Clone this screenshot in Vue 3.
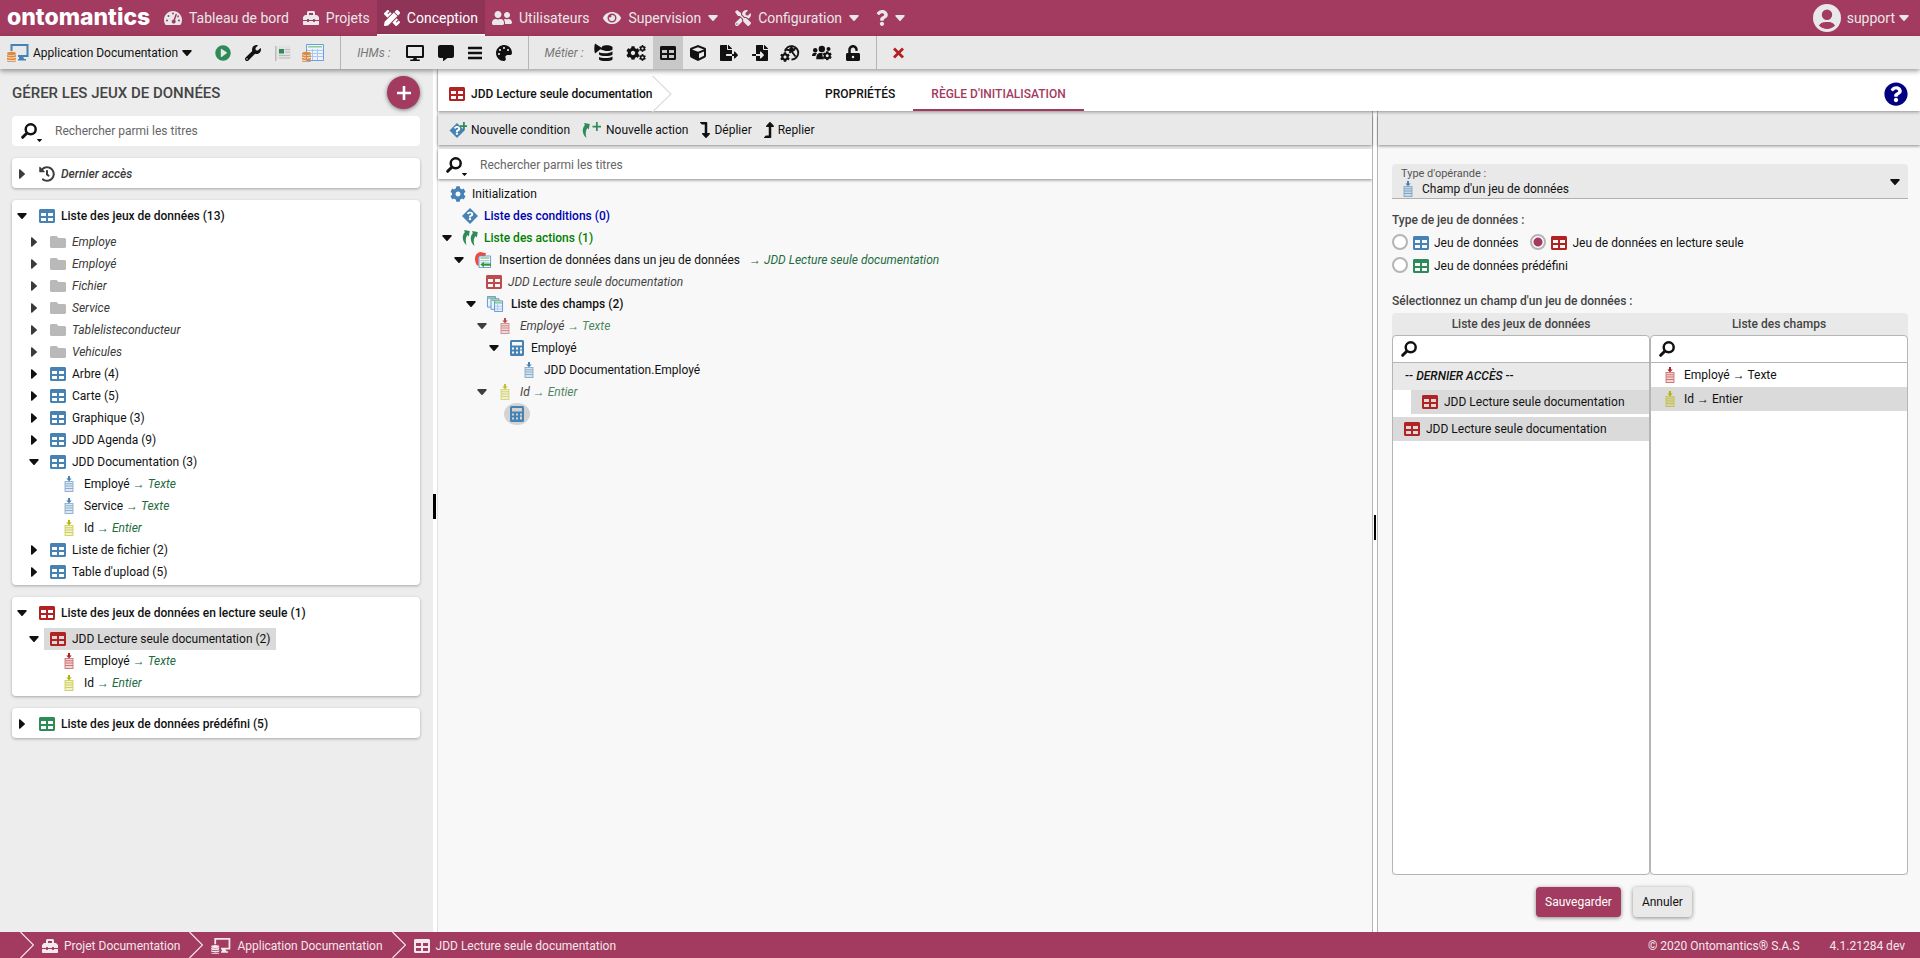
<script setup>
import { ref } from 'vue'

const navItems = [
  { label: 'Tableau de bord', icon: 'gauge', w: 'w18' },
  { label: 'Projets', icon: 'toolbox', w: 'w16' },
  { label: 'Conception', icon: 'pencil-ruler', w: 'w16', active: true },
  { label: 'Utilisateurs', icon: 'users', w: 'w20' },
  { label: 'Supervision', icon: 'eye', w: 'w18', menu: true },
  { label: 'Configuration', icon: 'tools', w: 'w16', menu: true }
]

const uiTools = [
  { name: 'Écrans', icon: 'desktop', w: 'w18' },
  { name: 'Messages', icon: 'comment', w: 'w16' },
  { name: 'Menus', icon: 'bars', w: 'w14' },
  { name: 'Thèmes', icon: 'palette', w: 'w16' }
]

const domainTools = [
  { name: 'Traitements', icon: 'db-flow', w: 'w16' },
  { name: 'Automates', icon: 'cogs', w: 'w20' },
  { name: 'Jeux de données', icon: 'table', w: 'w16', active: true },
  { name: 'Objets', icon: 'cube', w: 'w16' },
  { name: 'Exports', icon: 'file-export', w: 'w18' },
  { name: 'Imports', icon: 'file-import', w: 'w16' },
  { name: 'Services web', icon: 'globe-cog', w: 'w16' },
  { name: 'Profils', icon: 'users-cog', w: 'w20' },
  { name: 'Droits', icon: 'unlock', w: 'w14' }
]

const folder = label => ({ label, icon: 'folder', tone: 'muted', caret: 'right', italic: true })
const dataset = label => ({ label, icon: 'table', tone: 'blue', caret: 'right' })
const field = (label, type, tone) => ({ label, type, tone, icon: 'field', leaf: true })

const groups = [
  { label: 'Dernier accès', icon: 'history', tone: 'dark', italic: true, open: false, rows: [] },
  {
    label: 'Liste des jeux de données (13)', icon: 'table', tone: 'blue', open: true,
    rows: [
      folder('Employe'), folder('Employé'), folder('Fichier'),
      folder('Service'), folder('Tablelisteconducteur'), folder('Vehicules'),
      dataset('Arbre (4)'), dataset('Carte (5)'), dataset('Graphique (3)'), dataset('JDD Agenda (9)'),
      { ...dataset('JDD Documentation (3)'), caret: 'down' },
      field('Employé', 'Texte', 'blue'), field('Service', 'Texte', 'blue'), field('Id', 'Entier', 'yellow'),
      dataset('Liste de fichier (2)'), dataset("Table d'upload (5)")
    ]
  },
  {
    label: 'Liste des jeux de données en lecture seule (1)', icon: 'table', tone: 'red', open: true,
    rows: [
      { label: 'JDD Lecture seule documentation (2)', icon: 'table', tone: 'red', caret: 'down', selected: true },
      field('Employé', 'Texte', 'red'), field('Id', 'Entier', 'yellow')
    ]
  },
  { label: 'Liste des jeux de données prédéfini (5)', icon: 'table', tone: 'green', open: false, rows: [] }
]

const ruleTree = [
  { level: 0, icon: 'cog', w: 'w16', tone: 'blue', label: 'Initialization' },
  { level: 1, icon: 'condition', w: 'w16', tone: 'blue', label: 'Liste des conditions (0)', look: 'navy strong' },
  { level: 1, icon: 'actions', w: 'w16', tone: 'green', label: 'Liste des actions (1)', look: 'forest strong', caret: true },
  { level: 2, icon: 'insert', w: 'w18', label: 'Insertion de données dans un jeu de données', target: 'JDD Lecture seule documentation', look: 'wide', caret: true },
  { level: 3, icon: 'table', w: 'w16', tone: 'red', label: 'JDD Lecture seule documentation', look: 'italic faded' },
  { level: 3, icon: 'sheets', w: 'w18', label: 'Liste des champs (2)', look: 'strong wide', caret: true },
  { level: 4, icon: 'field', w: 'w16', tone: 'red', label: 'Employé', type: 'Texte', look: 'italic wide faded', caret: true },
  { level: 5, icon: 'calculator', w: 'w16', tone: 'blue', label: 'Employé', caret: true },
  { level: 6, icon: 'field', w: 'w16', tone: 'blue', label: 'JDD Documentation.Employé', look: 'wide' },
  { level: 4, icon: 'field', w: 'w16', tone: 'yellow', label: 'Id', type: 'Entier', look: 'italic wide faded', caret: true },
  { level: 5, icon: 'calculator', w: 'w16', tone: 'blue', label: '', picked: true }
]

const kinds = [
  { value: 'std', label: 'Jeu de données', tone: 'blue' },
  { value: 'ro', label: 'Jeu de données en lecture seule', tone: 'red' },
  { value: 'pre', label: 'Jeu de données prédéfini', tone: 'green' }
]
const kind = ref('ro')
const operand = ref('field')

const crumbs = [
  { label: 'Projet Documentation', icon: 'toolbox', w: 'w16' },
  { label: 'Application Documentation', icon: 'app-db', w: 'w20' },
  { label: 'JDD Lecture seule documentation', icon: 'table', w: 'w16' }
]
</script>

<template>
  <div class="page">
    <svg class="defs" aria-hidden="true">
      <symbol id="table" viewBox="0 0 512 512"><path d="M464 32H48C21.490 32 0 53.490 0 80v352c0 26.510 21.490 48 48 48h416c26.510 0 48-21.490 48-48V80c0-26.510-21.490-48-48-48zM224 416H64v-96h160v96zm0-160H64v-96h160v96zm224 160H288v-96h160v96zm0-160H288v-96h160v96z" /></symbol>
      <symbol id="folder" viewBox="0 0 512 512"><path d="M464 128H272l-64-64H48C21.490 64 0 85.490 0 112v288c0 26.510 21.490 48 48 48h416c26.510 0 48-21.490 48-48V176c0-26.510-21.490-48-48-48z" /></symbol>
      <symbol id="caret-down" viewBox="0 0 10 6"><path d="M1 0h8a.8.8 0 0 1 .6 1.300L5.600 5.700a.8.8 0 0 1-1.200 0L.4 1.300A.8.8 0 0 1 1 0z" /></symbol>
      <symbol id="caret-right" viewBox="0 0 6 10"><path d="M0 1v8a.8.8 0 0 0 1.300.6L5.700 5.600a.8.8 0 0 0 0-1.200L1.300.4A.8.8 0 0 0 0 1z" /></symbol>
      <symbol id="gauge" viewBox="0 0 576 512">
        <path fill-rule="evenodd" d="M288 32C129 32 0 161 0 320c0 53 14 102 39 145 6 10 16 15 27 15h443c11 0 22-5 28-15 25-43 39-92 39-145C576 161 447 32 288 32zM256 108a32 32 0 1 1 64 0 32 32 0 0 1-64 0zM64 336a32 32 0 1 1 64 0 32 32 0 0 1-64 0zM112 192a32 32 0 1 1 64 0 32 32 0 0 1-64 0zM448 336a32 32 0 1 1 64 0 32 32 0 0 1-64 0zM366 135l-58 170a64 64 0 1 0 46 16l57-170a24 24 0 0 0-45-16zM420 225l18-54a32 32 0 1 1-18 54z" />
      </symbol>
      <symbol id="toolbox" viewBox="0 0 512 512"><path d="M502.630 214.630l-45.250-45.250c-6-6-14.140-9.370-22.630-9.370H384V80c0-26.510-21.490-48-48-48H176c-26.510 0-48 21.490-48 48v80H77.250c-8.490 0-16.620 3.370-22.630 9.370L9.370 214.630c-6 6-9.370 14.140-9.370 22.630V320h128v-16c0-8.840 7.160-16 16-16h32c8.840 0 16 7.160 16 16v16h128v-16c0-8.840 7.160-16 16-16h32c8.840 0 16 7.160 16 16v16h128v-82.750c0-8.480-3.370-16.620-9.370-22.620zM320 160H192V96h128v64zm64 208c0 8.840-7.160 16-16 16h-32c-8.840 0-16-7.160-16-16v-16H192v16c0 8.840-7.160 16-16 16h-32c-8.840 0-16-7.160-16-16v-16H0v96c0 17.670 14.330 32 32 32h448c17.670 0 32-14.330 32-32v-96H384v16z" /></symbol>
      <symbol id="pencil-ruler" viewBox="0 0 512 512"><path d="M109.460 244.040l134.580-134.560-44.120-44.120-61.680 61.680a7.919 7.919 0 0 1-11.210 0l-11.210-11.210c-3.100-3.100-3.100-8.120 0-11.210l61.680-61.680-33.640-33.650C131.470-3.100 111.390-3.100 99 9.290L9.290 99c-12.380 12.390-12.390 32.470 0 44.860l100.170 100.180zm388.470-116.800c18.760-18.760 18.750-49.170 0-67.930l-45.250-45.250c-18.760-18.760-49.180-18.760-67.950 0l-46.020 46.010 113.200 113.200 46.020-46.030zM316.080 82.710l-297 296.960L.32 487.110c-2.530 14.490 10.090 27.110 24.590 24.560l107.450-18.840L429.280 195.900 316.080 82.710zm186.630 285.430l-33.640-33.640-61.680 61.680c-3.100 3.100-8.120 3.100-11.210 0l-11.210-11.210c-3.090-3.100-3.090-8.120 0-11.210l61.680-61.680-44.140-44.140L267.930 402.500l100.210 100.200c12.390 12.390 32.470 12.390 44.860 0l89.710-89.700c12.390-12.390 12.390-32.470 0-44.860z" /></symbol>
      <symbol id="users" viewBox="0 0 640 512"><path d="M192 256c61.900 0 112-50.100 112-112S253.900 32 192 32 80 82.100 80 144s50.100 112 112 112zm76.800 32h-8.300c-20.800 10-43.900 16-68.500 16s-47.600-6-68.500-16h-8.300C51.600 288 0 339.600 0 403.200V432c0 26.500 21.500 48 48 48h288c26.500 0 48-21.500 48-48v-28.800c0-63.600-51.600-115.200-115.200-115.200zM480 256c53 0 96-43 96-96s-43-96-96-96-96 43-96 96 43 96 96 96zm48 32h-3.800c-13.900 4.800-28.600 8-44.200 8s-30.300-3.200-44.200-8H432c-20.400 0-39.200 5.900-55.700 15.400 24.400 26.300 39.700 61.200 39.700 99.800v38.400c0 2.200-.5 4.300-.6 6.400H592c26.500 0 48-21.500 48-48 0-61.900-50.100-112-112-112z" /></symbol>
      <symbol id="eye" viewBox="0 0 576 512"><path d="M572.520 241.400C518.290 135.590 410.930 64 288 64S57.680 135.640 3.480 241.410a32.350 32.350 0 0 0 0 29.190C57.710 376.410 165.070 448 288 448s230.320-71.640 284.520-177.410a32.350 32.350 0 0 0 0-29.190zM288 400a144 144 0 1 1 144-144 143.930 143.930 0 0 1-144 144zm0-240a95.310 95.310 0 0 0-25.310 3.790 47.850 47.850 0 0 1-66.900 66.900A95.780 95.780 0 1 0 288 160z" /></symbol>
      <symbol id="tools" viewBox="0 0 512 512"><path d="M501.100 395.700L384 278.600c-23.100-23.100-57.600-27.600-85.400-13.900L192 158.100V96L64 0 0 64l96 128h62.100l106.600 106.600c-13.600 27.800-9.200 62.300 13.900 85.400l117.100 117.100c14.600 14.600 38.200 14.600 52.700 0l52.700-52.700c14.500-14.600 14.500-38.200 0-52.700zM331.700 225c28.300 0 54.900 11 74.900 31l19.400 19.400c15.800-6.900 30.800-16.500 43.800-29.500 37.100-37.100 49.700-89.300 37.900-136.700-2.200-9-13.500-12.100-20.100-5.500l-74.400 74.400-67.900-11.300L334 98.900l74.400-74.400c6.600-6.600 3.400-17.900-5.700-20.200-47.400-11.700-99.600.9-136.600 37.900-28.500 28.500-41.900 66.100-41.200 103.600l82.100 82.100c8.100-1.900 16.500-2.900 24.700-2.900zm-103.900 82l-56.700-56.700L18.700 402.800c-25 25-25 65.500 0 90.500s65.500 25 90.500 0l123.600-123.600c-7.600-19.900-9.900-41.600-5-62.700zM64 472c-13.200 0-24-10.800-24-24 0-13.300 10.700-24 24-24s24 10.700 24 24c0 13.200-10.700 24-24 24z" /></symbol>
      <symbol id="question" viewBox="0 0 384 512"><path d="M202.021 0C122.202 0 70.503 32.703 29.914 91.026c-7.363 10.580-5.093 25.086 5.178 32.874l43.138 32.709c10.373 7.865 25.132 6.026 33.253-4.148 25.049-31.381 43.630-49.449 82.757-49.449 30.764 0 68.816 19.799 68.816 49.631 0 22.552-18.617 34.134-48.993 51.164-35.423 19.860-82.299 44.576-82.299 106.405V320c0 13.255 10.745 24 24 24h72.471c13.255 0 24-10.745 24-24v-5.773c0-42.860 125.268-44.645 125.268-160.627C377.504 66.256 286.902 0 202.021 0zM192 373.459c-38.196 0-69.271 31.075-69.271 69.271 0 38.195 31.075 69.270 69.271 69.270s69.271-31.075 69.271-69.271-31.075-69.270-69.271-69.270z" /></symbol>
      <symbol id="help" viewBox="0 0 512 512"><path d="M504 256c0 136.997-111.043 248-248 248S8 392.997 8 256C8 119.083 119.043 8 256 8s248 111.083 248 248zM262.655 90c-54.497 0-89.255 22.957-116.549 63.758-3.536 5.286-2.353 12.415 2.715 16.258l34.699 26.310c5.205 3.947 12.621 3.008 16.665-2.122 17.864-22.658 30.113-35.797 57.303-35.797 20.429 0 45.698 13.148 45.698 32.958 0 14.976-12.363 22.667-32.534 33.976C247.128 238.528 216 254.941 216 296v4c0 6.627 5.373 12 12 12h56c6.627 0 12-5.373 12-12v-1.333c0-28.462 83.186-29.647 83.186-106.667 0-58.002-60.165-102-116.531-102zM256 338c-25.365 0-46 20.635-46 46 0 25.364 20.635 46 46 46s46-20.636 46-46c0-25.365-20.635-46-46-46z" /></symbol>
      <symbol id="avatar" viewBox="0 0 28 28"><path fill-rule="evenodd" d="M14 0a14 14 0 1 0 0 28 14 14 0 0 0 0-28zM14 5.500a5.200 5.200 0 1 1 0 10.400 5.200 5.200 0 0 1 0-10.400zM6 21.500c2-3 4-3.500 8-3.500s6 .5 8 3.500c-2 2.300-5 3.500-8 3.500s-6-1.200-8-3.500z" /></symbol>
      <symbol id="play" viewBox="0 0 512 512"><path fill-rule="evenodd" d="M256 8a248 248 0 1 0 0 496 248 248 0 0 0 0-496zM186 140c0-14 15-22 27-15l160 108c11 7 11 24 0 31L213 384c-12 7-27-1-27-15z" /></symbol>
      <symbol id="wrench" viewBox="0 0 512 512"><path d="M507.730 109.100c-2.240-9.030-13.540-12.090-20.120-5.510l-74.360 74.360-67.880-11.310-11.310-67.880 74.360-74.360c6.620-6.620 3.430-17.900-5.660-20.160-47.380-11.740-99.550.91-136.580 37.930-39.640 39.640-50.550 97.100-34.050 147.200L18.740 402.760c-24.990 24.990-24.990 65.510 0 90.500 24.990 24.990 65.510 24.990 90.500 0l213.210-213.210c50.120 16.710 107.470 5.680 147.370-34.220 37.070-37.070 49.700-89.320 37.910-136.730zM64 472c-13.250 0-24-10.750-24-24 0-13.260 10.750-24 24-24s24 10.740 24 24c0 13.250-10.750 24-24 24z" /></symbol>
      <symbol id="desktop" viewBox="0 0 576 512"><path d="M528 0H48C21.500 0 0 21.500 0 48v320c0 26.500 21.500 48 48 48h192l-16 48h-72c-13.300 0-24 10.700-24 24s10.700 24 24 24h272c13.300 0 24-10.700 24-24s-10.700-24-24-24h-72l-16-48h192c26.500 0 48-21.500 48-48V48c0-26.500-21.500-48-48-48zm-16 352H64V64h448v288z" /></symbol>
      <symbol id="comment" viewBox="0 0 512 512"><path d="M448 0H64C28.700 0 0 28.700 0 64v288c0 35.300 28.700 64 64 64h96v84c0 9.800 11.200 15.500 19.100 9.700L304 416h144c35.300 0 64-28.700 64-64V64c0-35.300-28.700-64-64-64z" /></symbol>
      <symbol id="bars" viewBox="0 0 14 16"><path d="M0 1.800h14v2.400H0zM0 6.800h14v2.400H0zM0 11.800h14v2.400H0z" /></symbol>
      <symbol id="palette" viewBox="0 0 512 512"><path d="M204.300 5C104.900 24.400 24.800 104.300 5.200 203.400c-37 187 131.700 326.400 258.800 306.700 41.200-6.400 61.400-54.600 42.500-91.700-23.100-45.400 9.900-98.400 60.900-98.400h79.700c35.800 0 64.800-29.600 64.900-65.300C511.500 97.100 368.100-26.900 204.300 5zM96 320c-17.700 0-32-14.300-32-32s14.300-32 32-32 32 14.300 32 32-14.300 32-32 32zm32-128c-17.700 0-32-14.300-32-32s14.300-32 32-32 32 14.300 32 32-14.300 32-32 32zm128-64c-17.700 0-32-14.300-32-32s14.300-32 32-32 32 14.300 32 32-14.300 32-32 32zm128 64c-17.700 0-32-14.300-32-32s14.300-32 32-32 32 14.300 32 32-14.300 32-32 32z" /></symbol>
      <symbol id="cog" viewBox="0 0 512 512"><path d="M487.400 315.700l-42.600-24.600c4.300-23.200 4.300-47 0-70.200l42.600-24.600c4.900-2.800 7.100-8.600 5.500-14-11.100-35.600-30-67.800-54.700-94.600-3.800-4.100-10-5.100-14.800-2.300L380.800 110c-17.900-15.400-38.500-27.300-60.800-35.100V25.800c0-5.600-3.900-10.500-9.400-11.700-36.700-8.200-74.300-7.800-109.200 0-5.500 1.200-9.400 6.100-9.400 11.700V75c-22.200 7.900-42.800 19.800-60.800 35.100L88.700 85.500c-4.900-2.800-11-1.900-14.800 2.300-24.700 26.700-43.600 58.900-54.700 94.600-1.700 5.400.6 11.200 5.500 14L67.300 221c-4.300 23.200-4.300 47 0 70.200l-42.600 24.600c-4.900 2.800-7.100 8.600-5.500 14 11.100 35.600 30 67.800 54.700 94.600 3.800 4.100 10 5.100 14.800 2.300l42.600-24.600c17.900 15.400 38.500 27.300 60.800 35.100v49.200c0 5.600 3.900 10.500 9.400 11.700 36.700 8.200 74.300 7.800 109.200 0 5.500-1.200 9.400-6.100 9.400-11.700v-49.200c22.200-7.900 42.800-19.800 60.800-35.100l42.600 24.600c4.900 2.800 11 1.900 14.800-2.300 24.700-26.700 43.600-58.900 54.700-94.600 1.500-5.500-.7-11.300-5.600-14.100zM256 336c-44.100 0-80-35.900-80-80s35.900-80 80-80 80 35.900 80 80-35.900 80-80 80z" /></symbol>
      <symbol id="cogs" viewBox="0 0 20 16"><use href="#cog" x="0" y="1" width="14" height="14" /><use href="#cog" x="13" y="0" width="7" height="7" /><use href="#cog" x="13" y="9" width="7" height="7" /></symbol>
      <symbol id="cube" viewBox="0 0 512 512"><path d="M239.100 6.300l-208 78c-18.700 7-31.100 25-31.100 45v225.100c0 18.200 10.300 34.800 26.500 42.900l208 104c13.500 6.800 29.400 6.800 42.900 0l208-104c16.300-8.100 26.500-24.800 26.500-42.900V129.300c0-20-12.400-37.900-31.100-44.900l-208-78C262 2.200 250 2.200 239.100 6.300zM256 68.400l192 72v1.100l-192 78-192-78v-1.100l192-72zm32 356V275.500l160-65v133.900l-160 80z" /></symbol>
      <symbol id="file-export" viewBox="0 0 576 512"><path d="M384 121.900c0-6.300-2.500-12.400-7-16.900L279.100 7c-4.500-4.500-10.600-7-17-7H256v128h128zM571 308l-95.700-96.400c-10.100-10.100-27.400-3-27.400 11.300V288h-64v64h64v65.200c0 14.300 17.300 21.400 27.400 11.300L571 332c6.600-6.600 6.600-17.400 0-24zm-379 28v-32c0-8.800 7.200-16 16-16h176V160H248c-13.200 0-24-10.800-24-24V0H24C10.700 0 0 10.700 0 24v464c0 13.300 10.700 24 24 24h336c13.300 0 24-10.700 24-24V352H208c-8.800 0-16-7.200-16-16z" /></symbol>
      <symbol id="file-import" viewBox="0 0 512 512"><path d="M16 288c-8.800 0-16 7.200-16 16v32c0 8.800 7.200 16 16 16h112v-64zm489-183L407.100 7c-4.500-4.500-10.600-7-17-7H384v128h128v-6.100c0-6.300-2.500-12.400-7-16.900zm-153 31V0H152c-13.300 0-24 10.700-24 24v264h128v-65.200c0-14.300 17.300-21.400 27.400-11.300L379 308c6.600 6.700 6.600 17.400 0 24l-95.700 96.400c-10.100 10.100-27.400 3-27.400-11.300V352H128v136c0 13.300 10.700 24 24 24h336c13.300 0 24-10.700 24-24V160H376c-13.200 0-24-10.800-24-24z" /></symbol>
      <symbol id="db-flow" viewBox="0 0 16 16" overflow="visible"><path d="M-1-1.500L6 3-1 8.500c-1-3-1-7 0-10z" /><path d="M6.500 1C9-.2 15 0 16.500 2v2.500C15.500 6 11 6.500 8 5.500L4.500 4.500zM3 7.200c3 1.500 10.500 1.500 13.500-.7v3c-1.500 2-11.500 2.200-13.500 0zM3 12c3 1.500 10.500 1.500 13.500-.5v3c-1.500 2-11.500 2.200-13.500 0z" /></symbol>
      <symbol id="globe-cog" viewBox="0 0 16 16" overflow="visible"><path fill="none" stroke="currentColor" stroke-width="1.800" d="M3 6.500A6.700 6.700 0 1 1 9.500 14.500M4 4.500l5 1L14.500 3M9 5.500l4.500 6M9 5.500L7.500 8" /><path d="M7 4l3-3.500 1 3 2.500 1.500-3.500 2.500z" /><use href="#cog" x="-2" y="7" width="10" height="10" /></symbol>
      <symbol id="users-cog" viewBox="0 0 20 16"><circle cx="3.200" cy="5.200" r="2.200" /><circle cx="9.800" cy="4" r="3.200" /><circle cx="16.500" cy="4" r="2" /><path d="M0 11c0-2.500 1.200-3.300 3-3.300 1 0 1.700.3 2 .7C3.800 9.300 3.600 10 3.400 11zM4.300 14.200c-.2-4 1.300-6.200 4-6.200h2.500c-1 2 0 4.500 1.200 6.200z" /><use href="#cog" x="10.500" y="6" width="9.500" height="9.500" /></symbol>
      <symbol id="unlock" viewBox="0 0 448 512"><path fill-rule="evenodd" d="M400 256H152V152.900c0-39.600 31.700-72.500 71.300-72.900 40-.4 72.700 32.100 72.700 72v16c0 13.300 10.700 24 24 24h32c13.300 0 24-10.700 24-24v-16C376 68 307.500-.3 223.500 0 139.500.3 72 69.500 72 153.500V256H48c-26.500 0-48 21.500-48 48v160c0 26.500 21.500 48 48 48h352c26.500 0 48-21.500 48-48V304c0-26.500-21.500-48-48-48zM184 384a40 40 0 1 1 80 0 40 40 0 0 1-80 0z" /></symbol>
      <symbol id="cross" viewBox="0 0 11 16"><path fill="none" stroke="currentColor" stroke-width="2.800" d="M1 3.500l9 9M10 3.500l-9 9" /></symbol>
      <symbol id="history" viewBox="0 0 512 512"><path d="M504 255.531c.253 136.640-111.180 248.372-247.820 248.468-59.015.042-113.223-20.530-155.822-54.911-11.077-8.940-11.905-25.541-1.839-35.607l11.267-11.267c8.609-8.609 22.353-9.551 31.891-1.984C173.062 425.135 212.781 440 256 440c101.705 0 184-82.311 184-184 0-101.705-82.311-184-184-184-48.814 0-93.149 18.969-126.068 49.932l50.754 50.754c10.080 10.080 2.941 27.314-11.313 27.314H24c-8.837 0-16-7.163-16-16V38.627c0-14.254 17.234-21.393 27.314-11.314l49.372 49.372C129.209 34.136 189.552 8 256 8c136.810 0 247.747 110.780 248 247.531zm-180.912 78.784l9.823-12.630c8.138-10.463 6.253-25.542-4.210-33.679L288 256.349V152c0-13.255-10.745-24-24-24h-16c-13.255 0-24 10.745-24 24v135.651l65.409 50.874c10.463 8.137 25.541 6.253 33.679-4.210z" /></symbol>
      <symbol id="level-down" viewBox="0 0 320 512"><path d="M313.553 392.331L209.587 504.334c-9.485 10.214-25.676 10.229-35.174 0L70.438 392.331C56.232 377.031 67.062 352 88.025 352H152V80H68.024a11.996 11.996 0 0 1-8.485-3.515l-56-56C-4.021 12.926 1.333 0 12.024 0H208c13.255 0 24 10.745 24 24v328h63.966c20.878 0 31.851 24.969 17.587 40.331z" /></symbol>
      <symbol id="level-up" viewBox="0 0 320 512"><g transform="matrix(1 0 0 -1 0 512)"><path d="M313.553 392.331L209.587 504.334c-9.485 10.214-25.676 10.229-35.174 0L70.438 392.331C56.232 377.031 67.062 352 88.025 352H152V80H68.024a11.996 11.996 0 0 1-8.485-3.515l-56-56C-4.021 12.926 1.333 0 12.024 0H208c13.255 0 24 10.745 24 24v328h63.966c20.878 0 31.851 24.969 17.587 40.331z" /></g></symbol>
      <symbol id="search" viewBox="0 0 16 16"><circle cx="9.700" cy="6.300" r="5" fill="none" stroke="currentColor" stroke-width="2.500" /><path stroke="currentColor" stroke-width="3" stroke-linecap="round" d="M5.500 10.500L1.700 14.300" /></symbol>
      <symbol id="plus" viewBox="0 0 14 14"><path d="M5.700 0h2.600v5.700H14v2.600H8.300V14H5.700V8.300H0V5.700h5.700z" /></symbol>
      <symbol id="field" viewBox="0 0 16 16">
        <path d="M7 0h2v2.500h1.800L8 5.200 5.200 2.500H7z" />
        <path opacity=".55" fill-rule="evenodd" d="M3.500 5h9v11h-9zM4.500 6v1.300h7V6zM4.500 8.300v1.300h7V8.300zM4.500 10.600v1.300h7v-1.300zM4.500 12.900V15h7v-2.100z" />
        <path opacity=".18" d="M4 5.500h8v10H4z" />
      </symbol>
      <symbol id="calculator" viewBox="0 0 16 16"><path fill-rule="evenodd" d="M2.500 0h11A1.500 1.500 0 0 1 15 1.500v13a1.500 1.500 0 0 1-1.500 1.500h-11A1.500 1.500 0 0 1 1 14.500v-13A1.500 1.500 0 0 1 2.500 0zM3 2v3.500h10V2zM3 7.500v2h2v-2zM7 7.500v2h2v-2zM11 7.500v2h2v-2zM3 11.500v2h2v-2zM7 11.500v2h2v-2zM11 10.500v3h2v-3z" /></symbol>
      <symbol id="condition" viewBox="0 0 16 16"><path d="M8 0l8 8-8 8-8-8z" /><use href="#question" x="4.500" y="3.500" width="7" height="9" class="inverse" /></symbol>
      <symbol id="new-condition" viewBox="0 0 18 16"><path fill="#4682b4" d="M8 1l7.500 7.500L8 16 .5 8.500z" /><use href="#question" x="4.500" y="4" width="7" height="9" class="inverse" /><path fill="#2e8b57" d="M14 0h1.800v3.200H19V5h-3.200v3.200H14V5h-3.200V3.200H14z" /></symbol>
      <symbol id="arrow-curve" viewBox="0 0 8 16"><path d="M2 0l6 1-1 6-1.400-1.600C3.500 8 3.300 12 4.500 16 .5 12.500-1 7 2.700 2.500z" /></symbol>
      <symbol id="actions" viewBox="0 0 16 16"><use href="#arrow-curve" x="0" y="0" width="8" height="15" /><use href="#arrow-curve" x="8" y="1" width="8" height="15" /></symbol>
      <symbol id="new-action" viewBox="0 0 20 16"><use href="#arrow-curve" x="0" y="1" width="8" height="15" /><path d="M14 0h1.700v3.800H19v1.700h-3.300V9H14V5.500h-3.500V3.800H14z" /></symbol>
      <symbol id="insert" viewBox="0 0 18 18"><path fill="#ef4b3c" d="M12.500 1.500L6 0C0 1-1.500 8 1.500 14L4 16V6h7z" /><path fill="#fff" stroke="#5b8fd0" d="M4.500 4.500h13v13h-13z" /><path fill="#7bc27b" d="M6 6h10v1.500H6z" /><path stroke="#9bbde8" d="M6 9.500h10M6 11.500h10" /><path fill="#2f9a2f" d="M6 14l4-3v2h8v2.500h-8v2z" /></symbol>
      <symbol id="sheets" viewBox="0 0 18 18"><g fill="#e8f1fc" stroke="#5b8fd0"><path d="M.5.5h9v12h-9z" /><path d="M4.500 3h9v12h-9z" /><path d="M8.500 5.500h9v12h-9z" /></g><path fill="#7bc27b" d="M1 1.500h8V3H1zM5 4h8v1.500H5zM9 7h8v1.500H9z" /><path stroke="#a9c6ec" d="M9 11.500h8M9 14.500h8M12 9v8" /></symbol>
      <symbol id="app-db" viewBox="0 0 22 18"><path fill="none" stroke="currentColor" stroke-width="2" d="M4.500 7V1h16v11H11" /><path d="M12 12h4l1 3h2v1.500h-8V15h1z" /><g class="coins"><ellipse cx="4.500" cy="9.500" rx="4.500" ry="1.700" /><path d="M0 10.800c1 1.300 8 1.300 9 0v1.800c-1 1.300-8 1.300-9 0zM0 13.500c1 1.300 8 1.300 9 0v1.800c-1 1.300-8 1.300-9 0zM0 16.200c1 1.300 8 1.300 9 0v1c-1 1.300-8 1.300-9 0z" /></g></symbol>
      <symbol id="doc-list" viewBox="0 0 16 16"><path fill="#bbb" d="M0 1h1.500v15H0z" /><path fill="#e2e2e2" d="M2 1h14v13H2z" /><path fill="#2e8b57" d="M4 4h5v4.500H4z" /><path fill="#bbb" d="M10 4h5v1h-5zM10 6.500h5v1h-5zM4 10h11v1H4zM4 12.500h11v1H4z" /></symbol>
      <symbol id="data-grid" viewBox="0 0 22 18"><path fill="#eef4fd" stroke="#6c9fdc" d="M4.500.5h17v16h-17z" /><path fill="#8fce8f" d="M6 2h14v1.500H6z" /><path stroke="#a9c6ec" d="M5 6.500h16M5 9.500h16M5 12.500h16M10.500 5v11M15.500 5v11" /><g fill="#dd8a3e"><ellipse cx="4.500" cy="9.500" rx="4.500" ry="1.700" /><path d="M0 10.800c1 1.300 8 1.300 9 0v1.800c-1 1.300-8 1.300-9 0zM0 13.500c1 1.300 8 1.300 9 0v1.800c-1 1.300-8 1.300-9 0zM0 16.200c1 1.300 8 1.300 9 0v1c-1 1.300-8 1.300-9 0z" /></g></symbol>
      <symbol id="chevron" viewBox="0 0 14 26"><path fill="none" stroke="currentColor" stroke-width="1.200" d="M.5 0l13 13-13 13" /></symbol>
      <symbol id="big-chevron" viewBox="0 0 20 36"><path fill="none" stroke="currentColor" stroke-width="1.200" d="M.5 0l18.500 18L.5 36" /></symbol>
    </svg>

    <header class="topbar">
      <a class="logo" href="#">ontomantics</a>
      <nav class="nav">
        <a v-for="n in navItems" :key="n.label" href="#" class="nav-item" :class="{ active: n.active, menu: n.menu }">
          <svg class="ic" :class="n.w"><use :href="'#' + n.icon" /></svg>
          <span>{{ n.label }}</span>
          <svg v-if="n.menu" class="ic caret"><use href="#caret-down" /></svg>
        </a>
        <a href="#" class="nav-item" aria-label="Aide">
          <svg class="ic w12"><use href="#question" /></svg>
          <svg class="ic caret"><use href="#caret-down" /></svg>
        </a>
      </nav>
      <button class="account" type="button">
        <svg class="ic avatar"><use href="#avatar" /></svg>
        <span>support</span>
        <svg class="ic caret"><use href="#caret-down" /></svg>
      </button>
    </header>

    <div class="toolbar">
      <button class="app-switch" type="button">
        <svg class="ic w22 blue two-tone"><use href="#app-db" /></svg>
        <span>Application Documentation</span>
        <svg class="ic caret"><use href="#caret-down" /></svg>
      </button>
      <div class="tools quick">
        <button type="button" class="tool" aria-label="Lancer"><svg class="ic w16 green"><use href="#play" /></svg></button>
        <button type="button" class="tool" aria-label="Paramétrer"><svg class="ic w16"><use href="#wrench" /></svg></button>
        <button type="button" class="tool" aria-label="Rapport"><svg class="ic w16"><use href="#doc-list" /></svg></button>
        <button type="button" class="tool snug" aria-label="Données"><svg class="ic w22"><use href="#data-grid" /></svg></button>
      </div>
      <div class="tools">
        <span class="group-name">IHMs :</span>
        <button v-for="t in uiTools" :key="t.name" type="button" class="tool" :aria-label="t.name">
          <svg class="ic" :class="t.w"><use :href="'#' + t.icon" /></svg>
        </button>
      </div>
      <div class="tools">
        <span class="group-name near">Métier :</span>
        <button v-for="t in domainTools" :key="t.name" type="button" class="tool" :class="{ active: t.active }" :aria-label="t.name">
          <svg class="ic" :class="t.w"><use :href="'#' + t.icon" /></svg>
        </button>
      </div>
      <div class="tools">
        <button type="button" class="tool red" aria-label="Fermer"><svg class="ic w11"><use href="#cross" /></svg></button>
      </div>
    </div>

    <div class="workspace">
      <aside class="side">
        <div class="side-head">
          <h1>GÉRER LES JEUX DE DONNÉES</h1>
          <button class="add" type="button" aria-label="Ajouter"><svg class="ic plus"><use href="#plus" /></svg></button>
        </div>
        <label class="search boxed">
          <span class="lens"><svg class="ic w16"><use href="#search" /></svg><svg class="ic tick"><use href="#caret-down" /></svg></span>
          <input type="text" placeholder="Rechercher parmi les titres" />
        </label>
        <section v-for="g in groups" :key="g.label" class="card" :class="{ open: g.open }">
          <div class="card-head" :class="{ 'dark italic': g.italic }">
            <button type="button" class="twist" :aria-label="g.label"><svg class="ic" :class="g.open ? 'caret' : 'caret-r'"><use :href="g.open ? '#caret-down' : '#caret-right'" /></svg></button>
            <svg class="ic w16" :class="g.tone"><use :href="'#' + g.icon" /></svg>
            <span>{{ g.label }}</span>
          </div>
          <div v-for="(r, i) in g.rows" :key="i" class="row" :class="{ leaf: r.leaf, italic: r.italic, soft: r.italic }">
            <button v-if="r.caret" type="button" class="twist" :aria-label="r.label"><svg class="ic" :class="r.caret === 'down' ? 'caret' : 'caret-r'"><use :href="'#caret-' + r.caret" /></svg></button>
            <span class="node" :class="{ selected: r.selected }">
              <svg class="ic w16" :class="r.tone"><use :href="'#' + r.icon" /></svg>
              <span>{{ r.label }}<span v-if="r.type" class="type">&nbsp;<span class="arrow">→</span> <i>{{ r.type }}</i></span></span>
            </span>
          </div>
        </section>
      </aside>
      <div class="split left"><span class="grip"></span></div>

      <main class="content">
        <div class="tabbar">
          <div class="title">
            <svg class="ic w16 red"><use href="#table" /></svg>
            <span>JDD Lecture seule documentation</span>
            <svg class="ic big-chevron"><use href="#big-chevron" /></svg>
          </div>
          <nav class="tabs">
            <a href="#" class="tab">PROPRIÉTÉS</a>
            <a href="#" class="tab current">RÈGLE D'INITIALISATION</a>
          </nav>
          <button class="help" type="button" aria-label="Aide"><svg class="ic w24"><use href="#help" /></svg></button>
        </div>

        <div class="panes">
          <section class="rule">
            <div class="actions">
              <button type="button"><svg class="ic w18"><use href="#new-condition" /></svg>Nouvelle condition</button>
              <button type="button"><svg class="ic w20 green"><use href="#new-action" /></svg>Nouvelle action</button>
              <button type="button"><svg class="ic w10"><use href="#level-down" /></svg>Déplier</button>
              <button type="button"><svg class="ic w10"><use href="#level-up" /></svg>Replier</button>
            </div>
            <label class="search wide-bar">
              <span class="lens"><svg class="ic w16"><use href="#search" /></svg><svg class="ic tick"><use href="#caret-down" /></svg></span>
              <input type="text" placeholder="Rechercher parmi les titres" />
            </label>
            <div class="tree">
              <div v-for="(n, i) in ruleTree" :key="i" class="tree-row" :class="['l' + n.level, n.look]">
                <span class="slot"><button v-if="n.caret" type="button" class="twist" :aria-label="n.label"><svg class="ic caret"><use href="#caret-down" /></svg></button></span>
                <span class="glyph" :class="{ picked: n.picked }"><svg class="ic" :class="[n.w, n.tone]"><use :href="'#' + n.icon" /></svg></span>
                <span class="text">{{ n.label }}<span v-if="n.type" class="type">&nbsp;<span class="arrow">→</span> <i>{{ n.type }}</i></span></span>
                <span v-if="n.target" class="type target"><span class="arrow">→</span> <i>{{ n.target }}</i></span>
              </div>
            </div>
          </section>
          <div class="split right"><span class="grip"></span></div>

          <section class="detail">
            <div class="actions"></div>
            <form class="form" @submit.prevent>
              <div class="select-box">
                <label for="operand">Type d'opérande :</label>
                <svg class="ic w16 blue select-icon"><use href="#field" /></svg>
                <select id="operand" v-model="operand"><option value="field">Champ d'un jeu de données</option></select>
                <svg class="ic caret select-caret"><use href="#caret-down" /></svg>
              </div>
              <fieldset class="kinds">
                <legend>Type de jeu de données :</legend>
                <label v-for="k in kinds" :key="k.value" class="kind">
                  <input v-model="kind" type="radio" name="kind" :value="k.value" />
                  <svg class="ic w16" :class="k.tone"><use href="#table" /></svg>
                  <span>{{ k.label }}</span>
                </label>
              </fieldset>
              <div class="caption">Sélectionnez un champ d'un jeu de données :</div>
              <div class="pick">
                <div class="pick-head">Liste des jeux de données</div>
                <div class="pick-head">Liste des champs</div>
                <div class="pick-box">
                  <label class="pick-search"><svg class="ic w16"><use href="#search" /></svg><input type="text" aria-label="Rechercher un jeu de données" /></label>
                  <div class="recent">-- <i>DERNIER ACCÈS</i> --</div>
                  <button type="button" class="option on nested"><svg class="ic w16 red"><use href="#table" /></svg>JDD Lecture seule documentation</button>
                  <button type="button" class="option on"><svg class="ic w16 red"><use href="#table" /></svg>JDD Lecture seule documentation</button>
                </div>
                <div class="pick-box">
                  <label class="pick-search"><svg class="ic w16"><use href="#search" /></svg><input type="text" aria-label="Rechercher un champ" /></label>
                  <button type="button" class="option"><svg class="ic w16 red"><use href="#field" /></svg><span>Employé <span class="arrow">→</span> Texte</span></button>
                  <button type="button" class="option on"><svg class="ic w16 yellow"><use href="#field" /></svg><span>Id <span class="arrow">→</span> Entier</span></button>
                </div>
              </div>
              <div class="buttons">
                <button type="submit" class="btn primary">Sauvegarder</button>
                <button type="button" class="btn">Annuler</button>
              </div>
            </form>
          </section>
        </div>
      </main>
    </div>

    <footer class="footer">
      <nav class="crumbs">
        <template v-for="c in crumbs" :key="c.label">
          <svg class="ic chevron"><use href="#chevron" /></svg>
          <a href="#"><svg class="ic" :class="c.w"><use :href="'#' + c.icon" /></svg>{{ c.label }}</a>
        </template>
      </nav>
      <span class="legal">© 2020 Ontomantics® S.A.S</span>
      <span class="legal version">4.1.21284 dev</span>
    </footer>
  </div>
</template>

<style>
html, body { height: 100%; }
body { overflow: hidden; }
</style>

<style scoped>
.page {
  --brand: #a33a5f;
  display: flex;
  flex-direction: column;
  min-height: 100vh;
  background: #ededed;
  color: #111;
  font: 12px/22px Roboto, "Liberation Sans", sans-serif;
}
.page * { box-sizing: border-box; }
.defs { position: absolute; width: 0; height: 0; }
button, input, select { font: inherit; color: inherit; }
button { display: inline-flex; align-items: center; border: 0; padding: 0; background: none; cursor: pointer; white-space: nowrap; }
a { color: inherit; text-decoration: none; white-space: nowrap; }
input { border: 0; outline: 0; background: none; min-width: 0; }

.ic { flex: none; height: 16px; fill: currentColor; overflow: visible; }
.w10 { width: 10px; }
.w11 { width: 11px; }
.w12 { width: 12px; }
.w14 { width: 14px; }
.w16 { width: 16px; }
.w18 { width: 18px; }
.w20 { width: 20px; }
.w22 { width: 22px; height: 18px; }
.w24 { width: 24px; height: 24px; }
.plus { width: 14px; height: 14px; }
.caret { width: 10px; height: 6px; }
.caret-r { width: 6px; height: 10px; }
.inverse { fill: #fff; }
.two-tone { --coin: #dd8a3e; }
.coins { fill: var(--coin, currentColor); }

.blue { color: #4682b4; }
.red { color: #b22222; }
.green { color: #2e8b57; }
.yellow { color: #b5b500; }
.muted { color: #b9b9b9; }
.dark { color: #3c3c3c; }
.soft { color: #3a3a3a; }
.italic { font-style: italic; }
.strong { font-weight: 500; }
.navy { color: #0000b0; }
.forest { color: #008000; }
.faded { opacity: .8; }
.type { color: #1f6b40; }
.arrow { font-family: "Liberation Sans", sans-serif; font-style: normal; line-height: 1; }
.tree-row .twist { color: #111; }

.topbar { display: flex; height: 36px; background: var(--brand); color: #e8e8e8; font-size: 14px; }
.logo { width: 157px; padding-left: 7px; color: #fff; font: 800 23px/35px Inter, sans-serif; }
.nav { display: flex; flex: 1; }
.nav-item { display: flex; align-items: center; gap: 7px; padding: 0 7px; }
.nav-item.menu { padding-right: 10px; }
.nav-item.active { background: #8f3457; color: #fff; box-shadow: inset 0 -2px #fff; }
.account { gap: 6px; padding: 0 11px 0 10px; }
.account .caret { margin-left: -2px; }
.avatar { width: 28px; height: 28px; }

.toolbar { position: relative; z-index: 5; display: flex; height: 33px; background: #e9e9e9; box-shadow: 0 2px 5px rgba(0, 0, 0, .4); }
.app-switch { gap: 4px; padding: 0 16px 0 7px; }
.tools { display: flex; align-items: center; padding: 0 9px 0 0; border-right: 1px solid #b5b5b5; }
.tools.quick { padding-right: 12px; }
.tools:last-child { padding-left: 9px; border: 0; }
.tool { justify-content: center; height: 33px; padding: 0 7px; }
.tool.snug { padding: 0 4px; }
.tool.active { background: #c8c8c8; }
.group-name { padding: 0 8px 0 16px; color: #777; font-style: italic; }
.group-name.near { padding-right: 5px; }

.workspace { display: flex; flex: 1; min-height: 0; }
.side { display: flex; flex-direction: column; flex: 0 0 433px; padding: 7px 13px 0 12px; gap: 12px; }
.side-head { display: flex; align-items: center; justify-content: space-between; height: 33px; margin-bottom: -5px; }
h1 { margin: 0; color: #444; font-size: 15px; font-weight: 500; }
.add { justify-content: center; width: 33px; height: 33px; border-radius: 50%; background: var(--brand); color: #fff; box-shadow: 0 1px 4px rgba(0, 0, 0, .5); }

.search { display: flex; align-items: center; height: 30px; padding-left: 9px; background: #fff; }
.search input { flex: 1; margin-left: 13px; padding: 0; }
.search input::placeholder { color: #666; opacity: 1; }
.search.boxed { border-radius: 4px; }
.lens { position: relative; display: flex; width: 21px; }
.tick { position: absolute; right: 0; bottom: -3px; width: 5px; height: 3px; }

.card { border-radius: 4px; background: #fff; box-shadow: 0 1px 3px rgba(0, 0, 0, .3); }
.card.open { padding: 0 0 2px; }
.card-head { display: flex; align-items: center; height: 30px; padding-top: 2px; font-weight: 500; gap: 6px; }
.card.open .card-head { height: 31px; padding-top: 0; }
.twist { justify-content: center; width: 10px; height: 22px; }
.card-head .twist { margin: 0 6px 0 5px; }
.row { display: flex; align-items: center; height: 22px; padding-left: 17px; }
.row .node { margin-left: 5px; }
.row.leaf { padding-left: 43px; }
.row.leaf .node { gap: 7px; margin: 0; }
.node { display: flex; align-items: center; gap: 6px; height: 22px; padding: 0 6px; white-space: nowrap; }
.node.selected { padding-right: 5px; background: #dadada; }

.split { display: flex; align-items: center; flex: none; padding-top: 11px; background: #fff; }
.grip { height: 25px; background: #000; }
.split.left { width: 5px; border-right: 1px solid #e2e2e2; }
.split.left .grip { width: 3px; }
.split.right { width: 6px; border: solid #b5b5b5; border-width: 0 1px; justify-content: center; }
.split.right .grip { width: 2px; }

.content { display: flex; flex-direction: column; flex: 1; min-width: 0; background: #f8f8f8; }
.tabbar { position: relative; z-index: 2; display: flex; height: 42px; background: #fff; box-shadow: 0 1px 3px rgba(0, 0, 0, .45); }
.title { display: flex; align-items: center; gap: 6px; width: 369px; padding: 7px 0 0 11px; font-weight: 500; white-space: nowrap; }
.big-chevron { width: 20px; height: 36px; margin-left: -7px; color: #ddd; }
.tabs { display: flex; flex: 1; }
.tab { display: flex; align-items: center; padding: 7px 18px 0; font-weight: 500; }
.tab.current { color: var(--brand); box-shadow: inset 0 -2px var(--brand); }
.help { padding: 7px 12px 0; color: #000080; }

.panes { display: flex; flex: 1; min-height: 0; }
.rule { display: flex; flex-direction: column; flex: 1; min-width: 0; }
.actions { position: relative; z-index: 1; display: flex; align-items: center; gap: 12px; height: 31px; margin-top: 3px; padding: 1px 0 0 11px; background: #e9e9e9; box-shadow: 0 1px 3px rgba(0, 0, 0, .45); }
.actions button { gap: 4px; }
.search.wide-bar { margin-top: 4px; padding: 1px 0 0 8px; box-shadow: 0 1px 3px rgba(0, 0, 0, .45); }
.tree { padding-top: 4px; }
.tree-row { display: flex; align-items: center; height: 22px; white-space: nowrap; }
.slot { display: flex; width: 20px; }
.glyph { display: flex; align-items: center; justify-content: center; margin-right: 6px; }
.wide .glyph { margin-right: 7px; }
.glyph.picked { width: 26px; height: 22px; margin: 0 -5px; border-radius: 50%; background: #d3d3d3; }
.target { margin-left: 9px; }
.l0 .slot { width: 12px; }
.l1 { padding-left: 4px; }
.l2 { padding-left: 16px; }
.l3 { padding-left: 28px; }
.l4 { padding-left: 39px; }
.l5 { padding-left: 51px; }
.l6 { padding-left: 63px; }

.detail { display: flex; flex-direction: column; flex: 0 0 542px; }
.form { display: flex; flex-direction: column; flex: 1; padding: 19px 12px 15px 14px; }
.select-box { position: relative; height: 35px; border-bottom: 1px solid #b0b0b0; border-radius: 4px 4px 0 0; background: #e9e9e9; }
.select-box label { position: absolute; top: 3px; left: 9px; color: #555; font-size: 11px; line-height: 14px; }
.select-box select { width: 100%; height: 34px; padding: 14px 0 0 30px; border: 0; outline: 0; appearance: none; background: none; }
.select-icon { position: absolute; left: 8px; bottom: 1px; }
.select-caret { position: absolute; right: 8px; top: 15px; }
.kinds { display: flex; flex-wrap: wrap; column-gap: 12px; row-gap: 1px; min-width: 0; margin: 10px 0 0; padding: 0; border: 0; }
.kinds legend, .caption { padding: 0; color: #444; font-weight: 500; }
.kind { display: flex; align-items: center; gap: 5px; height: 22px; }
.kind:last-child { width: 100%; }
.kind input { appearance: none; width: 16px; height: 16px; margin: 0; border: 2px solid #b5b5b5; border-radius: 50%; background: #fff; }
.kind input:checked { background: radial-gradient(circle, #a33a5f 0 4px, #fff 5px); }
.kind svg, .kind span { margin-top: 2px; }
.caption { margin-top: 14px; }
.pick { display: grid; grid-template-columns: 1fr 1fr; grid-template-rows: 22px 1fr; flex: 1; margin-top: 1px; border-radius: 4px 4px 0 0; background: #e9e9e9; }
.pick-head { text-align: center; color: #444; font-weight: 500; }
.pick-box { border: 1px solid #b5b5b5; border-radius: 4px; background: #fff; }
.pick-search { display: flex; align-items: center; height: 27px; padding-left: 8px; border-bottom: 1px solid #b5b5b5; }
.pick-search input { flex: 1; }
.recent { height: 27px; padding-left: 12px; background: #e9e9e9; font-weight: 500; line-height: 27px; }
.option { display: flex; width: 100%; height: 24px; padding-left: 11px; gap: 6px; }
.option.on { background: #dadada; }
.option.nested { width: calc(100% - 18px); margin: 0 0 3px 18px; }
.buttons { display: flex; justify-content: center; gap: 12px; margin-top: 12px; padding-right: 72px; }
.btn { height: 30px; padding: 0 9px; border-radius: 4px; background: #e9e9e9; box-shadow: 0 1px 4px rgba(0, 0, 0, .45); }
.btn.primary { background: var(--brand); color: #fff; }

.footer { position: relative; z-index: 3; display: flex; align-items: center; height: 26px; padding-right: 15px; background: var(--brand); color: #f3e8ec; }
.crumbs { display: flex; align-items: center; flex: 1; padding-left: 20px; }
.crumbs a { display: flex; align-items: center; gap: 6px; padding: 1px 9px 0 8px; }
.legal { padding-top: 1px; }
.chevron { width: 14px; height: 26px; }
.version { margin-left: 30px; }
</style>
